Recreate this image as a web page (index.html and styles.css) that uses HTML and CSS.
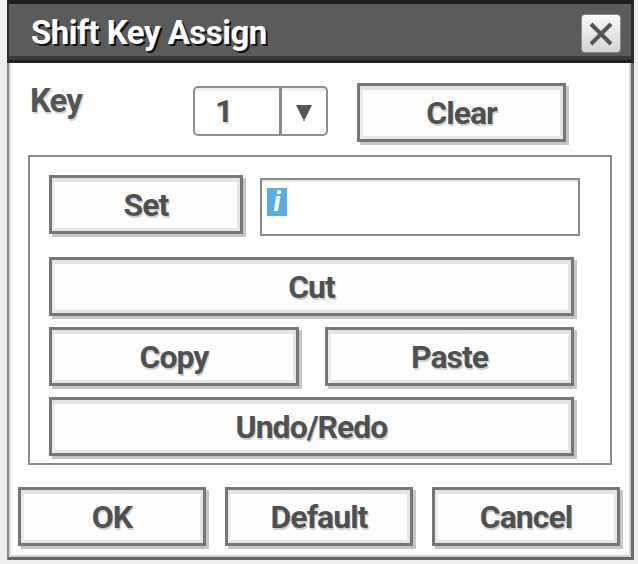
FILE: index.html
```html
<!DOCTYPE html>
<html lang="en">
<head>
  <meta charset="UTF-8">
  <meta name="viewport" content="width=device-width, initial-scale=1">
  <title>Shift Key Assign</title>
  <link rel="stylesheet" href="styles.css">
</head>
<body>

  <div class="dialog">
    <div class="titlebar">
      <span class="title">Shift Key Assign</span>
      <button class="close" aria-label="Close">
        <svg width="24" height="24" viewBox="0 0 24 24">
          <path d="M2 2 L22 22 M22 2 L2 22" stroke="#555" stroke-width="4" fill="none"/>
        </svg>
      </button>
    </div>

    <div class="panel">
      <!-- key picker -->
      <div class="key-row">
        <span class="key-label">Key</span>
        <div class="select">
          <span class="select-value">1</span>
          <span class="select-arrow">
            <svg width="16" height="16" viewBox="0 0 16 16">
              <polygon points="0,0 16,0 9,14 7,14" fill="#555"/>
              <rect x="7" y="14" width="2" height="2" fill="#999"/>
            </svg>
          </span>
        </div>
        <button class="btn btn-clear">Clear</button>
      </div>

      <!-- assignment box -->
      <div class="group">
        <div class="set-row">
          <button class="btn btn-set">Set</button>
          <div class="field"><span class="sel">i</span></div>
        </div>
        <button class="btn btn-wide">Cut</button>
        <div class="pair">
          <button class="btn btn-half">Copy</button>
          <button class="btn btn-half">Paste</button>
        </div>
        <button class="btn btn-wide">Undo/Redo</button>
      </div>

      <div class="actions">
        <button class="btn btn-action">OK</button>
        <button class="btn btn-action">Default</button>
        <button class="btn btn-action">Cancel</button>
      </div>
    </div>
  </div>

</body>
</html>
```

FILE: styles.css
```css
body {
  margin: 0;
  background-color: #efefef;
  font-family: Roboto, "Liberation Sans", sans-serif;
}
.dialog {
  width: 627px;
  margin-left: 7px;
}

/* title bar */
.titlebar {
  box-sizing: border-box;
  height: 63px;
  display: flex;
  align-items: center;
  justify-content: space-between;
  padding: 0 10px 0 22px;
  background-color: #5b5b5b;
  border-top: 4px solid #1e1e1e;
  border-bottom: 3px solid #222;
  border-left: 2px solid #2a2a2a;
  border-right: 3px solid #2a2a2a;
  box-shadow: inset 0 -4px 0 #3a3a3a;
}
.title {
  color: #fff;
  font-weight: 700;
  font-size: 33px;
  letter-spacing: -0.5px;
  text-shadow: 2px 2px 0 #111;
}
.close {
  width: 40px;
  height: 39px;
  margin-top: 3px;
  padding: 0;
  display: flex;
  align-items: center;
  justify-content: center;
  background: linear-gradient(#fafafa, #d4d4d4);
  border: 1px solid #8a8a8a;
  border-radius: 4px;
  box-shadow: inset 0 1px 0 #fff;
}

/* dialog body */
.panel {
  box-sizing: border-box;
  height: 497px;
  padding-top: 20px;
  background-color: #fff;
  border-left: 2px solid #8a8a8a;
  border-right: 3px solid #6c6c6c;
  border-bottom: 3px solid #666;
  box-shadow: inset 2px 0 0 #dcdcdc, inset -2px 0 0 #d2d2d2, inset 0 -2px 0 #d2d2d2;
}

/* push buttons */
.btn {
  box-sizing: border-box;
  height: 59px;
  padding: 0;
  border: 3px solid #767676;
  background-color: #fdfdfd;
  box-shadow:
    inset 0 4px 0 #e3e3e3,
    inset 3px 0 0 #ebebeb,
    inset 0 -3px 0 #e6e6e6,
    inset -3px 0 0 #e6e6e6,
    3px 3px 0 #c6c6c6;
  font-family: Roboto, "Liberation Sans", sans-serif;
  font-weight: 700;
  font-size: 32px;
  letter-spacing: -1px;
  color: #505050;
  text-shadow: 1px 2px 0 #cfcfcf;
}

.key-row {
  display: flex;
  align-items: flex-start;
  padding-left: 21px;
}
.key-label {
  width: 163px;
  margin-top: 1px;
  font-weight: 700;
  font-size: 33px;
  line-height: 33px;
  letter-spacing: -1px;
  color: #555;
  text-shadow: 1px 2px 0 #d4d4d4;
}
.select {
  box-sizing: border-box;
  display: flex;
  width: 135px;
  height: 50px;
  margin-top: 3px;
  border: 2px solid #8e8e8e;
  border-radius: 5px;
  background: linear-gradient(#f1f1f1 0 3px, #fff 3px);
}
.select-value {
  width: 64px;
  padding-left: 20px;
  border-right: 3px solid #8a8a8a;
  font-weight: 700;
  font-size: 32px;
  line-height: 46px;
  color: #505050;
  text-shadow: 1px 2px 0 #d4d4d4;
}
.select-arrow {
  flex: 1;
  display: flex;
  align-items: center;
  justify-content: center;
  padding-top: 4px;
}
.btn-clear {
  width: 209px;
  margin-left: 29px;
}

.group {
  box-sizing: border-box;
  width: 584px;
  height: 310px;
  margin: 13px 0 0 19px;
  padding: 18px 0 0 19px;
  border: 2px solid #8c8c8c;
  display: flex;
  flex-direction: column;
  gap: 11px;
}
.set-row {
  display: flex;
  align-items: flex-start;
  margin-bottom: 10px;
}
.btn-set {
  width: 194px;
}
.field {
  box-sizing: border-box;
  width: 320px;
  height: 58px;
  margin: 3px 0 0 17px;
  padding: 8px 0 0 5px;
  border: 2px solid #8a8a8a;
  box-shadow: inset 0 2px 0 #e8e8e8;
}
.sel {
  display: inline-block;
  width: 20px;
  height: 28px;
  background-color: #5aade4;
  color: #fff;
  font-weight: 700;
  font-style: italic;
  font-size: 28px;
  line-height: 28px;
  text-align: center;
}
.btn-wide {
  width: 525px;
}
.pair {
  display: flex;
  gap: 26px;
}
.btn-half {
  width: 250px;
}
.btn-half + .btn-half {
  width: 249px;
}

.actions {
  display: flex;
  gap: 19px;
  margin-top: 22px;
  padding-left: 9px;
}
.btn-action {
  width: 188px;
}
```
